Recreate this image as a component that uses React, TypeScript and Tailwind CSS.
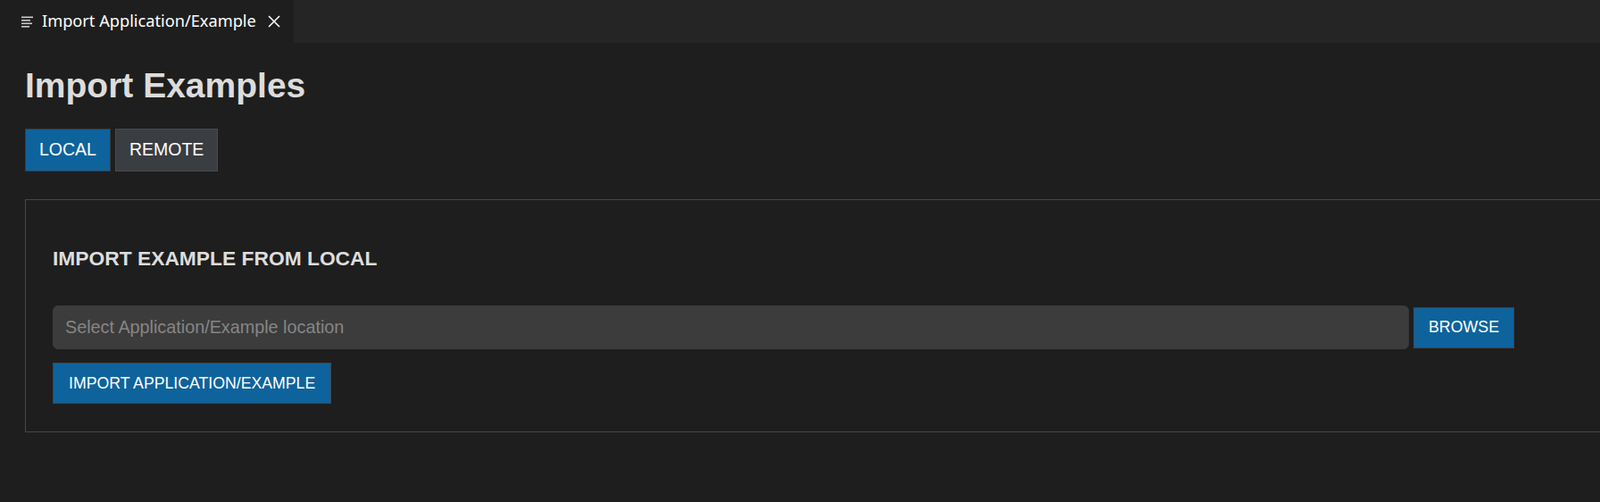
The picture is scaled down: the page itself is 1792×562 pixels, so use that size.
import React from "react";

const TabIcon = () => (
    <svg width="14" height="13" viewBox="0 0 14 13" fill="none" className="shrink-0">
        <rect x="0" y="0.5" width="13" height="1.6" fill="#cccccc" />
        <rect x="0" y="4" width="10" height="1.6" fill="#cccccc" />
        <rect x="0" y="7.5" width="12" height="1.6" fill="#cccccc" />
        <rect x="0" y="11" width="9" height="1.6" fill="#cccccc" />
    </svg>
);

const CloseIcon = () => (
    <svg width="14" height="14" viewBox="0 0 14 14" fill="none">
        <path d="M1 1L13 13M13 1L1 13" stroke="#ffffff" strokeWidth="1.5" />
    </svg>
);

export default function App() {
    return (
        <div className="h-[562px] w-full overflow-hidden bg-[#1e1e1e] font-['Liberation_Sans',Arial,sans-serif]">
            {/* tab strip */}
            <div className="flex h-[48px] bg-[#252526]">
                <div className="flex w-[329px] items-center bg-[#1e1e1e] pl-[24px]">
                    <TabIcon />
                    <span className="ml-[9px] font-['Noto_Sans',sans-serif] text-[18.2px] text-white">
                        Import Application/Example
                    </span>
                    <span className="ml-[13px] flex items-center">
                        <CloseIcon />
                    </span>
                </div>
            </div>

            <div className="pl-[28px]">
                <h1 className="mt-[24px] text-[39px] font-bold leading-[47px] text-[#dcdcdc]">
                    Import Examples
                </h1>

                <div className="mt-[25px] flex gap-[5px]">
                    <button className="h-[48px] border border-[#3c3c3c] bg-[#0e639c] px-[15px] text-[19.5px] text-white">
                        LOCAL
                    </button>
                    <button className="h-[48px] border border-[#4a4a4a] bg-[#3a3d41] px-[15px] text-[19.5px] text-white">
                        REMOTE
                    </button>
                </div>

                <div className="mt-[31px] w-[1800px] border border-[#474747] pb-[31px] pl-[30px] pt-[52px]">
                    <h2 className="text-[22.8px] font-bold leading-[27px] text-[#dddddd]">
                        IMPORT EXAMPLE FROM LOCAL
                    </h2>

                    <div className="mt-[39px] flex items-center gap-[5px]">
                        <input
                            placeholder="Select Application/Example location"
                            className="h-[49px] w-[1519px] rounded-[6px] border border-[#3c3c3c] bg-[#3c3c3c] px-[13px] text-[19.8px] text-[#cccccc] outline-none placeholder:text-[#868686]"
                        />
                        <button className="h-[46px] border border-[#454545] bg-[#0e639c] px-[16px] text-[17.8px] text-white">
                            BROWSE
                        </button>
                    </div>

                    <button className="mt-[15px] h-[46px] border border-[#454545] bg-[#0e639c] px-[17px] text-[17.7px] text-white">
                        IMPORT APPLICATION/EXAMPLE
                    </button>
                </div>
            </div>
        </div>
    );
}
